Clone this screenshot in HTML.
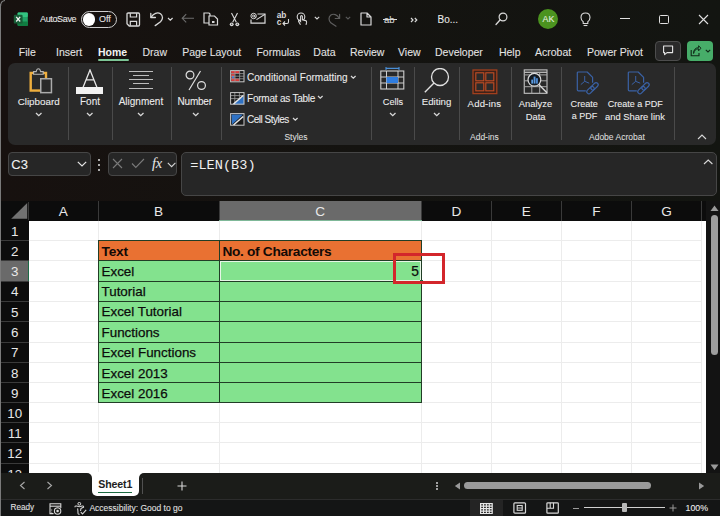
<!DOCTYPE html>
<html><head><meta charset="utf-8">
<style>
*{margin:0;padding:0;box-sizing:border-box}
html,body{width:720px;height:516px;overflow:hidden;background:linear-gradient(90deg,#17110f,#141310 50%,#131511) #15120f;font-family:"Liberation Sans",sans-serif;color:#fff;position:relative}
.a{position:absolute}
.t{position:absolute;white-space:nowrap;line-height:1}
</style></head><body>

<svg class="a" style="left:13px;top:12px;" width="16" height="15" viewBox="0 0 16 15" fill="none">
<rect x="4.6" y="0.6" width="10.2" height="13.4" rx="1.2" fill="#21a366"/>
<rect x="4.6" y="0.6" width="10.2" height="4.4" rx="1" fill="#33c481"/>
<rect x="4.6" y="9.6" width="10.2" height="4.4" rx="1" fill="#107c41"/>
<rect x="0.8" y="2.8" width="8.8" height="8.8" rx="1.2" fill="#185c37"/>
<path d="M3.2 4.9 L7.2 9.5 M7.2 4.9 L3.2 9.5" stroke="#f4f4f4" stroke-width="1.25"/>
</svg>
<div class="t" style="left:40px;top:14.88px;font-size:9px;color:#e8e8e8;font-weight:400;letter-spacing:-0.35px;-webkit-text-stroke:0.08px #e8e8e8">AutoSave</div>
<div class="a" style="left:81px;top:11px;width:36px;height:16.5px;border:1.2px solid #cfcfcf;border-radius:9px"></div>
<div class="a" style="left:82.8px;top:13px;width:12.5px;height:12.5px;background:#fff;border-radius:50%"></div>
<div class="t" style="left:99px;top:14.88px;font-size:9px;color:#e8e8e8;font-weight:400;;-webkit-text-stroke:0.08px #e8e8e8">Off</div>
<svg class="a" style="left:125.5px;top:11.5px;" width="15" height="15" viewBox="0 0 15 15" fill="none"><path d="M2.2 1 H12.3 Q13.5 1 13.5 2.2 V12.8 Q13.5 14 12.3 14 H3.2 L1 11.8 V2.2 Q1 1 2.2 1 Z" stroke="#d9d9d9" stroke-width="1.3" stroke-linejoin="round"/><path d="M4.3 1.2 V5 H10.6 V1.2 M4.3 13.8 V9.3 H10.6 V13.8" stroke="#d9d9d9" stroke-width="1.2"/></svg>
<svg class="a" style="left:149px;top:11px;" width="15" height="16" viewBox="0 0 15 16" fill="none"><path d="M1.8 2.4 V6.5 H6.4" stroke="#d9d9d9" stroke-width="1.3" stroke-linecap="round" stroke-linejoin="round"/><path d="M2.2 6.2 C4.5 2.5 8.5 0.8 11.5 2.8 C14.5 5 13.8 8.5 11.5 10.8 L6.2 14.6" stroke="#d9d9d9" stroke-width="1.3" stroke-linecap="round"/></svg>
<svg class="a" style="left:166.5px;top:16.5px;" width="7" height="4.5" viewBox="0 0 7 4.5" fill="none"><path d="M1 1 L3.3 3.2 L5.6 1" stroke="#d9d9d9" stroke-width="1.2"/></svg>
<svg class="a" style="left:180.5px;top:13px;" width="14" height="11" viewBox="0 0 14 11" fill="none"><path d="M13 5.3 H1.2 M5.2 1.2 L1.2 5.3 L5.2 9.4" stroke="#6e6e6e" stroke-width="1.1"/></svg>
<svg class="a" style="left:203px;top:12px;" width="16" height="14" viewBox="0 0 16 14" fill="none"><path d="M1 1 H6 L7 2 V11 H1 Z" stroke="#d9d9d9" stroke-width="1.2"/>
<path d="M6 4 H11.5 L14.5 7 V13 H6 Z" stroke="#d9d9d9" stroke-width="1.2" fill="#15120f"/><rect x="9" y="9" width="2.5" height="2" fill="#d9d9d9"/></svg>
<svg class="a" style="left:229px;top:12px;" width="11" height="15" viewBox="0 0 11 15" fill="none"><path d="M2.5 1 L7.3 10.2 M8.5 1 L3.7 10.2" stroke="#d9d9d9" stroke-width="1.1"/><circle cx="2.7" cy="12.3" r="1.9" fill="#d9d9d9"/><circle cx="8.3" cy="12.3" r="1.9" fill="#d9d9d9"/><circle cx="2.7" cy="12.3" r="0.7" fill="#444"/><circle cx="8.3" cy="12.3" r="0.7" fill="#444"/></svg>
<svg class="a" style="left:250px;top:12px;" width="16" height="13" viewBox="0 0 16 13" fill="none"><path d="M1 7.5 V11.2 H15 V2 H7.5" stroke="#d9d9d9" stroke-width="1.2"/><path d="M6.5 7.6 L15 2.2" stroke="#d9d9d9" stroke-width="1.1"/><circle cx="3.6" cy="4" r="2.7" stroke="#d9d9d9" stroke-width="1"/><path d="M4.6 3 V4.6 Q4.6 5.6 5.8 5.2" stroke="#d9d9d9" stroke-width="0.9"/><circle cx="3.5" cy="4" r="1" stroke="#d9d9d9" stroke-width="0.9"/></svg>
<div class="t" style="left:276.8px;top:12px;font-size:8.3px;color:#d9d9d9;line-height:6.6px;letter-spacing:-0.1px;font-weight:bold">ab<br>c</div>
<svg class="a" style="left:282px;top:18px;" width="8" height="8" viewBox="0 0 8 8" fill="none"><path d="M6.5 1 V4 Q6.5 5.5 5 5.5 H1 M3 3.5 L1 5.5 L3 7.5" stroke="#d9d9d9" stroke-width="1.1"/></svg>
<svg class="a" style="left:296px;top:12px;" width="12" height="14" viewBox="0 0 12 14" fill="none"><circle cx="5" cy="4.8" r="3.8" stroke="#d9d9d9" stroke-width="1.1"/>
<path d="M4.5 12.8 L2.6 9.6 Q2.2 8.6 3.3 8.4 L4.6 9.6 V4.6 Q4.6 3.6 5.5 3.6 Q6.4 3.6 6.4 4.6 V7.8 L9.6 8.6 Q10.8 9 10.6 10.4 L10 12.8" stroke="#d9d9d9" stroke-width="1.1" fill="#15120f"/></svg>
<svg class="a" style="left:314px;top:16px;" width="6" height="4" viewBox="0 0 6 4" fill="none"><path d="M0.8 0.8 L3 3 L5.2 0.8" stroke="#d9d9d9" stroke-width="1.1"/></svg>
<svg class="a" style="left:327px;top:11.5px;" width="15" height="16" viewBox="0 0 15 16" fill="none"><path d="M12.6 2.4 V6.5 H8.2" stroke="#5e5e5e" stroke-width="1.2" stroke-linecap="round" stroke-linejoin="round"/><path d="M12.3 6.2 C10.2 2.8 6.6 1.2 3.9 3 C1.2 5 1.6 8.5 3.8 10.8 L9 14.2" stroke="#5e5e5e" stroke-width="1.2" stroke-linecap="round"/></svg>
<svg class="a" style="left:345px;top:16px;" width="6" height="4" viewBox="0 0 6 4" fill="none"><path d="M0.8 0.8 L3 3 L5.2 0.8" stroke="#5a5a5a" stroke-width="1.1"/></svg>
<svg class="a" style="left:360px;top:12px;" width="12" height="14" viewBox="0 0 12 14" fill="none"><path d="M1 1 H7 L11 5 V13 H1 Z M7 1 V5 H11" stroke="#d9d9d9" stroke-width="1.2" stroke-linejoin="round"/></svg>
<div class="t" style="left:384px;top:14.96px;font-size:9.5px;color:#d9d9d9;font-weight:400;;-webkit-text-stroke:0.08px #d9d9d9">ab</div>
<div class="a" style="left:383px;top:19px;width:14px;height:1.1px;background:#d9d9d9"></div>
<svg class="a" style="left:409.5px;top:16.5px;" width="8" height="6" viewBox="0 0 8 6" fill="none"><path d="M1 1 L3 3 L1 5 M4.8 1 L6.8 3 L4.8 5" stroke="#d9d9d9" stroke-width="1.2"/></svg>
<div class="t" style="left:437.5px;top:14.54px;font-size:10px;color:#e8e8e8;font-weight:400;;-webkit-text-stroke:0.08px #e8e8e8">Bo...</div>
<svg class="a" style="left:495px;top:12px;" width="13" height="14" viewBox="0 0 13 14" fill="none"><circle cx="8" cy="5" r="3.9" stroke="#d9d9d9" stroke-width="1.2"/><path d="M5.2 7.8 L1 12.5" stroke="#d9d9d9" stroke-width="1.3" stroke-linecap="round"/></svg>
<div class="a" style="left:537.8px;top:8.9px;width:20.4px;height:20.3px;background:#4b931f;border-radius:50%"></div>
<div class="t" style="left:542.6px;top:15.15px;font-size:8.8px;color:#e8f0e0;font-weight:400;;-webkit-text-stroke:0.08px #e8f0e0">AK</div>
<svg class="a" style="left:580px;top:12px;" width="11" height="15" viewBox="0 0 11 15" fill="none"><path d="M3.2 9.8 Q1 8.2 1 5.6 Q1 1 5.5 1 Q10 1 10 5.6 Q10 8.2 7.8 9.8 V11.5 H3.2 Z" stroke="#d9d9d9" stroke-width="1.1"/><path d="M3.6 13.5 H7.4" stroke="#d9d9d9" stroke-width="1.1"/></svg>
<div class="a" style="left:619.5px;top:18px;width:10px;height:1.1px;background:#e0e0e0"></div>
<div class="a" style="left:659px;top:14.5px;width:9.5px;height:9.5px;border:1.1px solid #e0e0e0;border-radius:1.5px"></div>
<svg class="a" style="left:698px;top:14px;" width="11" height="11" viewBox="0 0 11 11" fill="none"><path d="M1 1 L10 10 M10 1 L1 10" stroke="#e0e0e0" stroke-width="1.1"/></svg>
<div class="t" style="left:18.8px;top:47.21px;font-size:10.5px;color:#e3e3e3;font-weight:400;;-webkit-text-stroke:0.08px #e3e3e3">File</div>
<div class="t" style="left:56px;top:47.21px;font-size:10.5px;color:#e3e3e3;font-weight:400;;-webkit-text-stroke:0.08px #e3e3e3">Insert</div>
<div class="t" style="left:98px;top:47.21px;font-size:10.5px;color:#f2f2f2;font-weight:700;">Home</div>
<div class="t" style="left:142.5px;top:47.21px;font-size:10.5px;color:#e3e3e3;font-weight:400;;-webkit-text-stroke:0.08px #e3e3e3">Draw</div>
<div class="t" style="left:182.2px;top:47.21px;font-size:10.5px;color:#e3e3e3;font-weight:400;;-webkit-text-stroke:0.08px #e3e3e3">Page Layout</div>
<div class="t" style="left:256.4px;top:47.21px;font-size:10.5px;color:#e3e3e3;font-weight:400;;-webkit-text-stroke:0.08px #e3e3e3">Formulas</div>
<div class="t" style="left:313.3px;top:47.21px;font-size:10.5px;color:#e3e3e3;font-weight:400;;-webkit-text-stroke:0.08px #e3e3e3">Data</div>
<div class="t" style="left:350px;top:47.21px;font-size:10.5px;color:#e3e3e3;font-weight:400;;-webkit-text-stroke:0.08px #e3e3e3">Review</div>
<div class="t" style="left:398px;top:47.21px;font-size:10.5px;color:#e3e3e3;font-weight:400;;-webkit-text-stroke:0.08px #e3e3e3">View</div>
<div class="t" style="left:435px;top:47.21px;font-size:10.5px;color:#e3e3e3;font-weight:400;;-webkit-text-stroke:0.08px #e3e3e3">Developer</div>
<div class="t" style="left:498.9px;top:47.21px;font-size:10.5px;color:#e3e3e3;font-weight:400;;-webkit-text-stroke:0.08px #e3e3e3">Help</div>
<div class="t" style="left:535px;top:47.21px;font-size:10.5px;color:#e3e3e3;font-weight:400;;-webkit-text-stroke:0.08px #e3e3e3">Acrobat</div>
<div class="t" style="left:587px;top:47.21px;font-size:10.5px;color:#e3e3e3;font-weight:400;;-webkit-text-stroke:0.08px #e3e3e3">Power Pivot</div>
<div class="a" style="left:98px;top:58.8px;width:31px;height:2.1px;background:#7cc596;border-radius:1px"></div>
<div class="a" style="left:655.3px;top:41px;width:25.6px;height:19.7px;background:#2a2a2a;border:1px solid #4d4d4d;border-radius:4px"></div>
<svg class="a" style="left:662px;top:45px;" width="13" height="11" viewBox="0 0 13 11" fill="none"><path d="M1.6 1 H10.6 V7.6 H5 L2.6 9.6 V7.6 H1.6 Z" stroke="#e6e6e6" stroke-width="1.1" stroke-linejoin="round"/></svg>
<div class="a" style="left:687px;top:41px;width:26.2px;height:19.7px;background:#47ad69;border-radius:4px"></div>
<svg class="a" style="left:690px;top:45px;" width="12" height="12" viewBox="0 0 12 12" fill="none"><path d="M1.2 5 V10.8 H9 V8" stroke="#102a18" stroke-width="1.1"/><path d="M3.6 8.5 Q4.2 4 8.6 3.8 V5.8 L11 3.2 L8.6 0.8 V2.6 Q3.5 3 3.6 8.5" stroke="#102a18" stroke-width="1" fill="none"/></svg>
<svg class="a" style="left:704.5px;top:49px;" width="6" height="4" viewBox="0 0 6 4" fill="none"><path d="M0.8 0.8 L3 3 L5.2 0.8" stroke="#102a18" stroke-width="1.1"/></svg>
<div class="a" style="left:8px;top:63px;width:708px;height:81.5px;background:#292929;border-radius:7px"></div>
<div class="a" style="left:67.5px;top:67px;width:1px;height:73px;background:#4a4a4a"></div>
<div class="a" style="left:111.5px;top:67px;width:1px;height:73px;background:#4a4a4a"></div>
<div class="a" style="left:170.5px;top:67px;width:1px;height:73px;background:#4a4a4a"></div>
<div class="a" style="left:220.5px;top:67px;width:1px;height:73px;background:#4a4a4a"></div>
<div class="a" style="left:370.6px;top:67px;width:1px;height:73px;background:#4a4a4a"></div>
<div class="a" style="left:414.3px;top:67px;width:1px;height:73px;background:#4a4a4a"></div>
<div class="a" style="left:459.4px;top:67px;width:1px;height:73px;background:#4a4a4a"></div>
<div class="a" style="left:510.6px;top:67px;width:1px;height:73px;background:#4a4a4a"></div>
<div class="a" style="left:560.6px;top:67px;width:1px;height:73px;background:#4a4a4a"></div>
<div class="a" style="left:673.7px;top:67px;width:1px;height:73px;background:#4a4a4a"></div>
<svg class="a" style="left:28px;top:67px;" width="26" height="28" viewBox="0 0 26 28" fill="none"><rect x="2.7" y="5.95" width="15.3" height="17.6" stroke="#eeae3e" stroke-width="2.4"/>
<path d="M5.6 7.2 V4.6 H8.2 Q8.7 1.7 10.4 1.7 Q12.1 1.7 12.6 4.6 H15.2 V7.2 Z" stroke="#b8b8b8" stroke-width="1.1" fill="#292929"/>
<rect x="12.75" y="11.75" width="10.7" height="13.9" stroke="#ababab" stroke-width="1.5" fill="#292929"/></svg>
<div class="t" style="left:17.7px;top:97.40px;font-size:9.8px;color:#ececec;font-weight:400;;-webkit-text-stroke:0.08px #ececec">Clipboard</div>
<svg class="a" style="left:34.65px;top:112.0px;" width="8" height="5" viewBox="0 0 8 5" fill="none"><path d="M1 1 L3.75 3.7 L6.5 1" stroke="#d8d8d8" stroke-width="1.3"/></svg>
<svg class="a" style="left:82px;top:68.5px;" width="16" height="19" viewBox="0 0 16 19" fill="none"><path d="M1 18.5 L8 1 L15 18.5 M4 10.8 H12" stroke="#e6e6e6" stroke-width="1.3"/></svg>
<div class="a" style="left:76px;top:86.7px;width:27.3px;height:7px;background:#f2f2f2"></div>
<div class="t" style="left:80px;top:97.23px;font-size:10px;color:#ececec;font-weight:400;;-webkit-text-stroke:0.08px #ececec">Font</div>
<svg class="a" style="left:85.55px;top:112.0px;" width="8" height="5" viewBox="0 0 8 5" fill="none"><path d="M1 1 L3.75 3.7 L6.5 1" stroke="#d8d8d8" stroke-width="1.3"/></svg>
<div class="a" style="left:129px;top:70.5px;width:24px;height:1.2px;background:#bdbdbd"></div>
<div class="a" style="left:133px;top:74.75px;width:16px;height:1.2px;background:#bdbdbd"></div>
<div class="a" style="left:129px;top:79.0px;width:24px;height:1.2px;background:#bdbdbd"></div>
<div class="a" style="left:133px;top:83.25px;width:16px;height:1.2px;background:#bdbdbd"></div>
<div class="a" style="left:129px;top:87.5px;width:24px;height:1.2px;background:#bdbdbd"></div>
<div class="t" style="left:118.7px;top:97.23px;font-size:10px;color:#ececec;font-weight:400;;-webkit-text-stroke:0.08px #ececec">Alignment</div>
<svg class="a" style="left:136.75px;top:112.0px;" width="8" height="5" viewBox="0 0 8 5" fill="none"><path d="M1 1 L3.75 3.7 L6.5 1" stroke="#d8d8d8" stroke-width="1.3"/></svg>
<svg class="a" style="left:185px;top:70px;" width="22" height="21" viewBox="0 0 22 21" fill="none"><circle cx="5" cy="5" r="3.9" stroke="#e0e0e0" stroke-width="1.2"/><circle cx="16.5" cy="15.5" r="3.9" stroke="#e0e0e0" stroke-width="1.2"/><path d="M15.5 1 L4 20" stroke="#e0e0e0" stroke-width="1.2"/></svg>
<div class="t" style="left:177.5px;top:97.23px;font-size:10px;color:#ececec;font-weight:400;letter-spacing:-0.2px;-webkit-text-stroke:0.08px #ececec">Number</div>
<svg class="a" style="left:191.55px;top:112.0px;" width="8" height="5" viewBox="0 0 8 5" fill="none"><path d="M1 1 L3.75 3.7 L6.5 1" stroke="#d8d8d8" stroke-width="1.3"/></svg>
<svg class="a" style="left:230px;top:70px;" width="15" height="13" viewBox="0 0 15 13" fill="none"><rect x="0.6" y="0.6" width="13.4" height="11.2" fill="#1a1a1a"/>
<rect x="1.2" y="1" width="8.4" height="2.6" fill="#d83b3b"/><rect x="1.2" y="3.6" width="3.6" height="5" fill="#d83b3b"/>
<rect x="2" y="6" width="2.2" height="2.4" fill="#3a7bd5"/><rect x="1.2" y="8.6" width="8.4" height="2.6" fill="#d83b3b"/>
<rect x="0.6" y="0.6" width="13.4" height="11.2" stroke="#c8c8c8" stroke-width="1"/>
<path d="M5 0.6 V11.8 M9.6 0.6 V11.8 M0.6 3.6 H14 M0.6 6.2 H14 M0.6 8.8 H14" stroke="#9a9a9a" stroke-width="0.8"/></svg>
<div class="t" style="left:247px;top:72.63px;font-size:10px;color:#ececec;font-weight:400;;-webkit-text-stroke:0.08px #ececec">Conditional Formatting</div>
<svg class="a" style="left:350.2px;top:74.5px;" width="7" height="4.5" viewBox="0 0 7 4.5" fill="none"><path d="M1 1 L3.3 3.2 L5.6 1" stroke="#d8d8d8" stroke-width="1.2"/></svg>
<svg class="a" style="left:230px;top:91.5px;" width="15" height="13" viewBox="0 0 15 13" fill="none"><rect x="0.6" y="0.6" width="13.4" height="11.6" fill="#1a1a1a"/>
<path d="M0.6 3.6 H14 M0.6 6.6 H14 M4.8 0.6 V12.2 M9.4 0.6 V12.2" stroke="#a0a0a0" stroke-width="0.8"/>
<path d="M2.5 12.2 L14 4 V12.2 Z" fill="#2f72c4"/>
<rect x="0.6" y="0.6" width="13.4" height="11.6" stroke="#c8c8c8" stroke-width="1"/>
<path d="M3.5 12 L13.2 3.5" stroke="#e6e6e6" stroke-width="1.6"/></svg>
<div class="t" style="left:247px;top:93.73px;font-size:10px;color:#ececec;font-weight:400;letter-spacing:-0.22px;-webkit-text-stroke:0.08px #ececec">Format as Table</div>
<svg class="a" style="left:317.4px;top:95.3px;" width="7" height="4.5" viewBox="0 0 7 4.5" fill="none"><path d="M1 1 L3.3 3.2 L5.6 1" stroke="#d8d8d8" stroke-width="1.2"/></svg>
<svg class="a" style="left:230px;top:112.5px;" width="15" height="13" viewBox="0 0 15 13" fill="none"><rect x="0.6" y="0.6" width="13.4" height="11.6" fill="#1a1a1a"/>
<path d="M1.5 1.5 H13 L2 11.5 Z" fill="#2f72c4"/>
<rect x="0.6" y="0.6" width="13.4" height="11.6" stroke="#c8c8c8" stroke-width="1"/>
<path d="M3.5 12 L13.2 3.5" stroke="#e6e6e6" stroke-width="1.6"/></svg>
<div class="t" style="left:247px;top:115.33px;font-size:10px;color:#ececec;font-weight:400;letter-spacing:-0.5px;-webkit-text-stroke:0.08px #ececec">Cell Styles</div>
<svg class="a" style="left:292.0px;top:116.9px;" width="7" height="4.5" viewBox="0 0 7 4.5" fill="none"><path d="M1 1 L3.3 3.2 L5.6 1" stroke="#d8d8d8" stroke-width="1.2"/></svg>
<div class="t" style="left:284.4px;top:132.50px;font-size:8.5px;color:#dcdcdc;font-weight:400;;-webkit-text-stroke:0.08px #dcdcdc">Styles</div>
<svg class="a" style="left:380px;top:66px;" width="25" height="24" viewBox="0 0 25 24" fill="none"><path d="M6 2.4 H19 M6 1 V4 M19 1 V4" stroke="#4a8fd6" stroke-width="1.1"/>
<rect x="0.8" y="5" width="23" height="18" stroke="#d0d0d0" stroke-width="1.1"/>
<path d="M0.8 11 H23.8 M0.8 17 H23.8 M6.5 5 V23 M18 5 V23" stroke="#d0d0d0" stroke-width="1"/>
<rect x="6.5" y="11" width="11.5" height="6" fill="#2f7de0"/></svg>
<div class="t" style="left:382.8px;top:97.91px;font-size:9.2px;color:#ececec;font-weight:400;;-webkit-text-stroke:0.08px #ececec">Cells</div>
<svg class="a" style="left:388.75px;top:112.0px;" width="8" height="5" viewBox="0 0 8 5" fill="none"><path d="M1 1 L3.75 3.7 L6.5 1" stroke="#d8d8d8" stroke-width="1.3"/></svg>
<svg class="a" style="left:423px;top:68px;" width="28" height="26" viewBox="0 0 28 26" fill="none"><circle cx="17" cy="9" r="8.5" stroke="#e0e0e0" stroke-width="1.3"/><path d="M11 15 L1.8 24.2" stroke="#e0e0e0" stroke-width="1.4"/></svg>
<div class="t" style="left:421.7px;top:97.49px;font-size:9.7px;color:#ececec;font-weight:400;;-webkit-text-stroke:0.08px #ececec">Editing</div>
<svg class="a" style="left:432.75px;top:112.0px;" width="8" height="5" viewBox="0 0 8 5" fill="none"><path d="M1 1 L3.75 3.7 L6.5 1" stroke="#d8d8d8" stroke-width="1.3"/></svg>
<svg class="a" style="left:472px;top:69px;" width="26" height="26" viewBox="0 0 26 26" fill="none"><rect x="1" y="1" width="23.8" height="23.6" stroke="#a23f1d" stroke-width="1.3" fill="#3b2119"/>
<rect x="3.8" y="3.8" width="8" height="8" stroke="#c24d24" stroke-width="1.1" fill="#2b2a2a"/><rect x="13.8" y="3.8" width="8" height="8" stroke="#c24d24" stroke-width="1.1" fill="#2b2a2a"/>
<rect x="3.8" y="13.8" width="8" height="8" stroke="#c24d24" stroke-width="1.1" fill="#2b2a2a"/><rect x="13.8" y="13.8" width="8" height="8" stroke="#c24d24" stroke-width="1.1" fill="#2b2a2a"/></svg>
<div class="t" style="left:467.6px;top:98.57px;font-size:9.6px;color:#ececec;font-weight:400;letter-spacing:0.15px;-webkit-text-stroke:0.08px #ececec">Add-ins</div>
<div class="t" style="left:470px;top:132.50px;font-size:8.5px;color:#dcdcdc;font-weight:400;;-webkit-text-stroke:0.08px #dcdcdc">Add-ins</div>
<svg class="a" style="left:523px;top:69px;" width="26" height="26" viewBox="0 0 26 26" fill="none"><rect x="1.25" y="0.9" width="22.75" height="23.4" stroke="#c4c4c4" stroke-width="1.1"/>
<path d="M1.25 3.3 H24" stroke="#bdbdbd" stroke-width="1.3"/>
<path d="M1.25 5.9 H24 M1.25 11.8 H24 M1.25 17.7 H24 M8.8 3.3 V24.3 M16.7 3.3 V24.3" stroke="#a8a8a8" stroke-width="1"/>
<circle cx="11.4" cy="10.8" r="6.4" stroke="#dadada" stroke-width="1.2" fill="#131920"/>
<path d="M15.8 15.4 L24 23.8" stroke="#dadada" stroke-width="1.4"/>
<rect x="8.3" y="10.6" width="1.7" height="4" fill="#5a9ae0"/><rect x="10.6" y="7.6" width="1.9" height="7" fill="#5a9ae0"/><rect x="13" y="9.2" width="1.9" height="5.4" fill="#4a84cc"/></svg>
<div class="t" style="left:518.8px;top:99.44px;font-size:9.4px;color:#ececec;font-weight:400;;-webkit-text-stroke:0.08px #ececec">Analyze</div>
<div class="t" style="left:525.7px;top:111.74px;font-size:9.4px;color:#ececec;font-weight:400;;-webkit-text-stroke:0.08px #ececec">Data</div>
<svg class="a" style="left:575.5px;top:71px;" width="24" height="24" viewBox="0 0 24 24" fill="none"><path d="M9.8 19.8 H2.4 Q1.3 19.8 1.3 18.7 V2.1 Q1.3 1 2.4 1 H11.2 L16.6 6.4 V11.8" stroke="#3a62a6" stroke-width="1.2" stroke-linejoin="round"/>
<path d="M8.7 5 V10.3 L4.8 13.6 M8.7 10.3 L13.2 12.2" stroke="#3a62a6" stroke-width="1"/>
<rect x="12.4" y="14.8" width="4.2" height="8.6" rx="2.1" transform="rotate(45 14.5 19.1)" stroke="#3a62a6" stroke-width="1.2"/>
<rect x="16.4" y="11" width="4.2" height="8.6" rx="2.1" transform="rotate(45 18.5 15.3)" stroke="#3a62a6" stroke-width="1.2"/></svg>
<div class="t" style="left:570.6px;top:99.50px;font-size:9.1px;color:#ececec;font-weight:400;;-webkit-text-stroke:0.08px #ececec">Create</div>
<div class="t" style="left:571.7px;top:111.88px;font-size:9px;color:#ececec;font-weight:400;;-webkit-text-stroke:0.08px #ececec">a PDF</div>
<svg class="a" style="left:626.5px;top:71px;" width="24" height="24" viewBox="0 0 24 24" fill="none"><path d="M9.8 19.8 H2.4 Q1.3 19.8 1.3 18.7 V2.1 Q1.3 1 2.4 1 H11.2 L16.6 6.4 V11.8" stroke="#3a62a6" stroke-width="1.2" stroke-linejoin="round"/>
<path d="M8.7 5 V10.3 L4.8 13.6 M8.7 10.3 L13.2 12.2" stroke="#3a62a6" stroke-width="1"/>
<rect x="12.4" y="14.8" width="4.2" height="8.6" rx="2.1" transform="rotate(45 14.5 19.1)" stroke="#3a62a6" stroke-width="1.2"/>
<rect x="16.4" y="11" width="4.2" height="8.6" rx="2.1" transform="rotate(45 18.5 15.3)" stroke="#3a62a6" stroke-width="1.2"/></svg>
<div class="t" style="left:607.7px;top:99.58px;font-size:9px;color:#ececec;font-weight:400;;-webkit-text-stroke:0.08px #ececec">Create a PDF</div>
<div class="t" style="left:605px;top:111.54px;font-size:9.4px;color:#ececec;font-weight:400;;-webkit-text-stroke:0.08px #ececec">and Share link</div>
<div class="t" style="left:589px;top:133.00px;font-size:8.5px;color:#dcdcdc;font-weight:400;;-webkit-text-stroke:0.08px #dcdcdc">Adobe Acrobat</div>
<svg class="a" style="left:697px;top:134px;" width="10" height="6" viewBox="0 0 10 6" fill="none"><path d="M1 5 L5 1 L9 5" stroke="#d8d8d8" stroke-width="1.1"/></svg>
<div class="a" style="left:7.5px;top:152px;width:83.5px;height:23.5px;background:#262626;border:1px solid #464646;border-radius:4px"></div>
<div class="t" style="left:11.3px;top:157.90px;font-size:13px;color:#f2f2f2;font-weight:400;;-webkit-text-stroke:0.08px #f2f2f2">C3</div>
<svg class="a" style="left:77px;top:161px;" width="10" height="6.5" viewBox="0 0 10 6.5" fill="none"><path d="M0.8 0.8 L5 5 L9.2 0.8" stroke="#e6e6e6" stroke-width="1.2"/></svg>
<div class="a" style="left:98.3px;top:159.2px;width:2px;height:2px;background:#e0e0e0;border-radius:50%"></div>
<div class="a" style="left:98.3px;top:164.2px;width:2px;height:2px;background:#e0e0e0;border-radius:50%"></div>
<div class="a" style="left:98.3px;top:169.2px;width:2px;height:2px;background:#e0e0e0;border-radius:50%"></div>
<div class="a" style="left:107.5px;top:152px;width:69.5px;height:23.5px;background:#262626;border:1px solid #464646;border-radius:4px"></div>
<svg class="a" style="left:112px;top:158px;" width="11" height="11" viewBox="0 0 11 11" fill="none"><path d="M1 1 L10 10 M10 1 L1 10" stroke="#7a7a7a" stroke-width="1.1"/></svg>
<svg class="a" style="left:131px;top:158px;" width="14" height="11" viewBox="0 0 14 11" fill="none"><path d="M1 5.5 L4.8 9.5 L13 1" stroke="#7a7a7a" stroke-width="1.1"/></svg>
<div class="t" style="left:152px;top:156px;font-size:14.5px;color:#e8e8e8;font-family:'Liberation Serif',serif;font-style:italic;letter-spacing:-0.3px">fx</div>
<svg class="a" style="left:166.5px;top:161.5px;" width="10" height="6" viewBox="0 0 10 6" fill="none"><path d="M0.8 0.8 L4.6 4.6 L8.4 0.8" stroke="#d6d6d6" stroke-width="1.1"/></svg>
<div class="a" style="left:180.5px;top:152px;width:536px;height:43.5px;background:#262626;border:1px solid #464646;border-radius:5px"></div>
<div class="t" style="left:190.3px;top:158.5px;font-size:13.6px;color:#f0f0f0;font-family:'Liberation Mono',monospace">=LEN(B3)</div>
<svg class="a" style="left:703px;top:159px;" width="11" height="6" viewBox="0 0 11 6" fill="none"><path d="M1 5 L5.2 1 L9.4 5" stroke="#d8d8d8" stroke-width="1.1"/></svg>
<div class="a" style="left:1px;top:201px;width:705px;height:19.5px;background:#0c0c0c"></div>
<div class="a" style="left:29px;top:220.5px;width:677px;height:258px;background:#ffffff"></div>
<div class="t" style="left:28.5px;width:69.8px;top:204.6px;font-size:13.6px;color:#e8e8e8;text-align:center">A</div>
<div class="t" style="left:98.3px;width:120.7px;top:204.6px;font-size:13.6px;color:#e8e8e8;text-align:center">B</div>
<div class="a" style="left:97.8px;top:201px;width:1px;height:19.5px;background:#3a3a3a"></div>
<div class="a" style="left:219px;top:201px;width:202.5px;height:19.5px;background:#6a6a6a"></div>
<div class="t" style="left:219px;width:202.5px;top:204.6px;font-size:13.6px;color:#e8e8e8;text-align:center">C</div>
<div class="a" style="left:218.5px;top:201px;width:1px;height:19.5px;background:#3a3a3a"></div>
<div class="t" style="left:421.5px;width:69.89999999999998px;top:204.6px;font-size:13.6px;color:#e8e8e8;text-align:center">D</div>
<div class="a" style="left:421.0px;top:201px;width:1px;height:19.5px;background:#3a3a3a"></div>
<div class="t" style="left:491.4px;width:69.89999999999998px;top:204.6px;font-size:13.6px;color:#e8e8e8;text-align:center">E</div>
<div class="a" style="left:490.9px;top:201px;width:1px;height:19.5px;background:#3a3a3a"></div>
<div class="t" style="left:561.3px;width:70.0px;top:204.6px;font-size:13.6px;color:#e8e8e8;text-align:center">F</div>
<div class="a" style="left:560.8px;top:201px;width:1px;height:19.5px;background:#3a3a3a"></div>
<div class="t" style="left:631.3px;width:70.5px;top:204.6px;font-size:13.6px;color:#e8e8e8;text-align:center">G</div>
<div class="a" style="left:630.8px;top:201px;width:1px;height:19.5px;background:#3a3a3a"></div>
<div class="a" style="left:701.3px;top:201px;width:1px;height:19.5px;background:#3a3a3a"></div>
<div class="a" style="left:219px;top:219.6px;width:202.5px;height:1.2px;background:#7fb898"></div>
<svg class="a" style="left:1px;top:201px;" width="28" height="20" viewBox="0 0 28 20" fill="none"><path d="M26.2 2 V17.8 H10.2 Z" fill="#727272"/></svg>
<div class="a" style="left:28px;top:202px;width:1px;height:18px;background:#3a3a3a"></div>
<div class="a" style="left:1px;top:220.5px;width:28px;height:252.5px;background:#0c0c0c"></div>
<div class="t" style="left:1px;width:27.5px;top:224.5px;font-size:13.4px;color:#e8e8e8;text-align:center">1</div>
<div class="a" style="left:1px;top:240.3px;width:27.5px;height:1px;background:#3a3a3a"></div>
<div class="t" style="left:1px;width:27.5px;top:245.1px;font-size:13.4px;color:#e8e8e8;text-align:center">2</div>
<div class="a" style="left:1px;top:260.4px;width:27.5px;height:1px;background:#3a3a3a"></div>
<div class="a" style="left:1px;top:260.9px;width:27.5px;height:20.100000000000023px;background:#6a6a6a"></div>
<div class="t" style="left:1px;width:27.5px;top:265.2px;font-size:13.4px;color:#e8e8e8;text-align:center">3</div>
<div class="a" style="left:1px;top:280.5px;width:27.5px;height:1px;background:#3a3a3a"></div>
<div class="t" style="left:1px;width:27.5px;top:285.3px;font-size:13.4px;color:#e8e8e8;text-align:center">4</div>
<div class="a" style="left:1px;top:300.7px;width:27.5px;height:1px;background:#3a3a3a"></div>
<div class="t" style="left:1px;width:27.5px;top:305.5px;font-size:13.4px;color:#e8e8e8;text-align:center">5</div>
<div class="a" style="left:1px;top:321.0px;width:27.5px;height:1px;background:#3a3a3a"></div>
<div class="t" style="left:1px;width:27.5px;top:325.8px;font-size:13.4px;color:#e8e8e8;text-align:center">6</div>
<div class="a" style="left:1px;top:341.6px;width:27.5px;height:1px;background:#3a3a3a"></div>
<div class="t" style="left:1px;width:27.5px;top:346.4px;font-size:13.4px;color:#e8e8e8;text-align:center">7</div>
<div class="a" style="left:1px;top:362.0px;width:27.5px;height:1px;background:#3a3a3a"></div>
<div class="t" style="left:1px;width:27.5px;top:366.8px;font-size:13.4px;color:#e8e8e8;text-align:center">8</div>
<div class="a" style="left:1px;top:382.0px;width:27.5px;height:1px;background:#3a3a3a"></div>
<div class="t" style="left:1px;width:27.5px;top:386.8px;font-size:13.4px;color:#e8e8e8;text-align:center">9</div>
<div class="a" style="left:1px;top:402.2px;width:27.5px;height:1px;background:#3a3a3a"></div>
<div class="t" style="left:1px;width:27.5px;top:407.0px;font-size:13.4px;color:#e8e8e8;text-align:center">10</div>
<div class="a" style="left:1px;top:422.0px;width:27.5px;height:1px;background:#3a3a3a"></div>
<div class="t" style="left:1px;width:27.5px;top:426.8px;font-size:13.4px;color:#e8e8e8;text-align:center">11</div>
<div class="a" style="left:1px;top:442.4px;width:27.5px;height:1px;background:#3a3a3a"></div>
<div class="t" style="left:1px;width:27.5px;top:447.2px;font-size:13.4px;color:#e8e8e8;text-align:center">12</div>
<div class="a" style="left:1px;top:462.6px;width:27.5px;height:1px;background:#3a3a3a"></div>
<div class="t" style="left:1px;width:27.5px;top:467.7px;font-size:13px;color:#e6e6e6;text-align:center;height:5px;overflow:hidden;line-height:13px">13</div>
<div class="a" style="left:28px;top:261px;width:1.2px;height:20px;background:#1d6b47"></div>
<div class="a" style="left:29px;top:240.3px;width:673px;height:1px;background:#ececec"></div>
<div class="a" style="left:29px;top:260.4px;width:673px;height:1px;background:#ececec"></div>
<div class="a" style="left:29px;top:280.5px;width:673px;height:1px;background:#ececec"></div>
<div class="a" style="left:29px;top:300.7px;width:673px;height:1px;background:#ececec"></div>
<div class="a" style="left:29px;top:321.0px;width:673px;height:1px;background:#ececec"></div>
<div class="a" style="left:29px;top:341.6px;width:673px;height:1px;background:#ececec"></div>
<div class="a" style="left:29px;top:362.0px;width:673px;height:1px;background:#ececec"></div>
<div class="a" style="left:29px;top:382.0px;width:673px;height:1px;background:#ececec"></div>
<div class="a" style="left:29px;top:402.2px;width:673px;height:1px;background:#ececec"></div>
<div class="a" style="left:29px;top:422.0px;width:673px;height:1px;background:#ececec"></div>
<div class="a" style="left:29px;top:442.4px;width:673px;height:1px;background:#ececec"></div>
<div class="a" style="left:29px;top:462.6px;width:673px;height:1px;background:#ececec"></div>
<div class="a" style="left:97.8px;top:220.5px;width:1px;height:252.5px;background:#ececec"></div>
<div class="a" style="left:218.5px;top:220.5px;width:1px;height:252.5px;background:#ececec"></div>
<div class="a" style="left:421.0px;top:220.5px;width:1px;height:252.5px;background:#ececec"></div>
<div class="a" style="left:490.9px;top:220.5px;width:1px;height:252.5px;background:#ececec"></div>
<div class="a" style="left:560.8px;top:220.5px;width:1px;height:252.5px;background:#ececec"></div>
<div class="a" style="left:630.8px;top:220.5px;width:1px;height:252.5px;background:#ececec"></div>
<div class="a" style="left:701.3px;top:220.5px;width:1px;height:252.5px;background:#ececec"></div>
<div class="a" style="left:98.3px;top:240.8px;width:323.2px;height:20.1px;background:#e97132"></div>
<div class="a" style="left:98.3px;top:260.9px;width:323.2px;height:141.8px;background:#83e28e"></div>
<div class="a" style="left:98px;top:240.3px;width:323.5px;height:1px;background:#213d26"></div>
<div class="a" style="left:98px;top:260.4px;width:323.5px;height:1px;background:#213d26"></div>
<div class="a" style="left:98px;top:280.5px;width:323.5px;height:1px;background:#213d26"></div>
<div class="a" style="left:98px;top:300.7px;width:323.5px;height:1px;background:#213d26"></div>
<div class="a" style="left:98px;top:321.0px;width:323.5px;height:1px;background:#213d26"></div>
<div class="a" style="left:98px;top:341.6px;width:323.5px;height:1px;background:#213d26"></div>
<div class="a" style="left:98px;top:362.0px;width:323.5px;height:1px;background:#213d26"></div>
<div class="a" style="left:98px;top:382.0px;width:323.5px;height:1px;background:#213d26"></div>
<div class="a" style="left:98px;top:402.2px;width:323.5px;height:1px;background:#213d26"></div>
<div class="a" style="left:97.8px;top:240.3px;width:1px;height:162.4px;background:#213d26"></div>
<div class="a" style="left:218.5px;top:240.3px;width:1px;height:162.4px;background:#213d26"></div>
<div class="a" style="left:421px;top:240.3px;width:1px;height:162.4px;background:#213d26"></div>
<div class="a" style="left:219.5px;top:261.3px;width:201.5px;height:1px;background:#e6f6e6"></div>
<div class="a" style="left:219.5px;top:279.8px;width:201.5px;height:1px;background:#e6f6e6"></div>
<div class="a" style="left:219.8px;top:261.3px;width:1px;height:19.5px;background:#e6f6e6"></div>
<div class="a" style="left:419.8px;top:261.3px;width:1px;height:18.5px;background:#e6f6e6"></div>
<div class="t" style="left:101.5px;top:244.90px;font-size:13.7px;color:#120a06;font-weight:700;letter-spacing:-0.2px">Text</div>
<div class="t" style="left:222.4px;top:244.90px;font-size:13.7px;color:#120a06;font-weight:700;letter-spacing:-0.3px">No. of Characters</div>
<div class="t" style="left:101.5px;top:264.96px;font-size:13.4px;color:#0c0c0c;font-weight:400;-webkit-text-stroke:0.25px #0c0c0c">Excel</div>
<div class="t" style="left:101.5px;top:285.06px;font-size:13.4px;color:#0c0c0c;font-weight:400;-webkit-text-stroke:0.25px #0c0c0c">Tutorial</div>
<div class="t" style="left:101.5px;top:305.26px;font-size:13.4px;color:#0c0c0c;font-weight:400;-webkit-text-stroke:0.25px #0c0c0c">Excel Tutorial</div>
<div class="t" style="left:101.5px;top:325.56px;font-size:13.4px;color:#0c0c0c;font-weight:400;-webkit-text-stroke:0.25px #0c0c0c">Functions</div>
<div class="t" style="left:101.5px;top:346.16px;font-size:13.4px;color:#0c0c0c;font-weight:400;-webkit-text-stroke:0.25px #0c0c0c">Excel Functions</div>
<div class="t" style="left:101.5px;top:366.56px;font-size:13.4px;color:#0c0c0c;font-weight:400;-webkit-text-stroke:0.25px #0c0c0c">Excel 2013</div>
<div class="t" style="left:101.5px;top:386.56px;font-size:13.4px;color:#0c0c0c;font-weight:400;-webkit-text-stroke:0.25px #0c0c0c">Excel 2016</div>
<div class="t" style="left:411.2px;top:265.32px;font-size:13.8px;color:#0c0c0c;font-weight:400;-webkit-text-stroke:0.25px #0c0c0c">5</div>
<div class="a" style="left:419.5px;top:279.5px;width:3px;height:3px;background:#1d6b47"></div>
<div class="a" style="left:393px;top:253.4px;width:52px;height:30.6px;border:3px solid #d3262b"></div>
<div class="a" style="left:706px;top:201px;width:14px;height:272px;background:#131313"></div>
<svg class="a" style="left:710px;top:205px;" width="9" height="7" viewBox="0 0 9 7" fill="none"><path d="M0.5 6 L4.5 0.5 L8.5 6 Z" fill="#9a9a9a"/></svg>
<div class="a" style="left:711px;top:214.8px;width:7px;height:140.5px;background:#9d9d9d;border-radius:3.5px"></div>
<svg class="a" style="left:710px;top:464px;" width="9" height="7" viewBox="0 0 9 7" fill="none"><path d="M0.5 0.5 L4.5 6 L8.5 0.5 Z" fill="#9a9a9a"/></svg>
<div class="a" style="left:1px;top:473.3px;width:90.7px;height:26px;background:#1b1c19;border-radius:0 5px 0 0"></div>
<div class="a" style="left:139.2px;top:473.3px;width:581px;height:26px;background:#1b1c19;border-radius:5px 0 0 0"></div>
<div class="a" style="left:91.7px;top:490px;width:47.5px;height:9px;background:#1b1c19"></div>
<svg class="a" style="left:19px;top:481px;" width="7" height="9" viewBox="0 0 7 9" fill="none"><path d="M5.5 1 L1.5 4.5 L5.5 8" stroke="#a8a8a8" stroke-width="1.1"/></svg>
<svg class="a" style="left:46px;top:481px;" width="7" height="9" viewBox="0 0 7 9" fill="none"><path d="M1.5 1 L5.5 4.5 L1.5 8" stroke="#a8a8a8" stroke-width="1.1"/></svg>
<div class="a" style="left:91.7px;top:472px;width:47.5px;height:23.6px;background:#ffffff;border-radius:0 0 5px 5px"></div>
<div class="t" style="left:98.3px;top:478.63px;font-size:10.6px;color:#1e1e1e;font-weight:700;letter-spacing:-0.15px">Sheet1</div>
<div class="a" style="left:98.4px;top:491.7px;width:33.6px;height:1.7px;background:#1d6b42"></div>
<div class="a" style="left:141.7px;top:478px;width:1px;height:15.7px;background:#505050"></div>
<svg class="a" style="left:176.5px;top:481px;" width="10" height="10" viewBox="0 0 10 10" fill="none"><path d="M5 0.5 V9.5 M0.5 5 H9.5" stroke="#d8d8d8" stroke-width="1.1"/></svg>
<div class="a" style="left:436px;top:482px;width:1.6px;height:1.6px;background:#bdbdbd;border-radius:50%"></div>
<div class="a" style="left:436px;top:485px;width:1.6px;height:1.6px;background:#bdbdbd;border-radius:50%"></div>
<div class="a" style="left:436px;top:488px;width:1.6px;height:1.6px;background:#bdbdbd;border-radius:50%"></div>
<svg class="a" style="left:453.5px;top:481.5px;" width="7" height="8" viewBox="0 0 7 8" fill="none"><path d="M6 0.5 L0.8 4 L6 7.5 Z" fill="#9a9a9a"/></svg>
<div class="a" style="left:463.7px;top:481.7px;width:187.6px;height:7px;background:#9a9a9a;border-radius:3.5px"></div>
<svg class="a" style="left:697.5px;top:481.5px;" width="7" height="8" viewBox="0 0 7 8" fill="none"><path d="M1 0.5 L6.2 4 L1 7.5 Z" fill="#9a9a9a"/></svg>
<div class="a" style="left:1px;top:498.5px;width:719px;height:17.5px;background:#141515"></div>
<div class="a" style="left:1px;top:498.6px;width:719px;height:1px;background:#2c2c2c"></div>
<div class="t" style="left:10.5px;top:504.46px;font-size:8.2px;color:#e0e0e0;font-weight:400;;-webkit-text-stroke:0.08px #e0e0e0">Ready</div>
<svg class="a" style="left:48.5px;top:503px;" width="14" height="12" viewBox="0 0 14 12" fill="none"><path d="M4.5 10.6 H1 V0.8 H11.8 V5" stroke="#d8d8d8" stroke-width="1.1"/><path d="M1 3.2 H11.8" stroke="#d8d8d8" stroke-width="1.1"/><path d="M2.7 6.5 V7.5 M2.7 8.8 V9.5" stroke="#d8d8d8" stroke-width="1"/><circle cx="8.6" cy="8" r="3.2" stroke="#d8d8d8" stroke-width="1.1" fill="#1b1c19"/><circle cx="8.6" cy="8" r="1.3" fill="#e0e0e0"/></svg>
<svg class="a" style="left:74px;top:502px;" width="14" height="13" viewBox="0 0 14 13" fill="none"><circle cx="5.3" cy="1.8" r="1.4" stroke="#d8d8d8" stroke-width="1"/><path d="M1 5.2 Q0.8 3.6 2.5 4 L5.3 4.8 L8.1 4 Q9.8 3.6 9.6 5.2 Q8.4 5.8 7 6.4 Q6.6 8.6 6.5 9 M3.6 6.4 Q4 8.6 4 11.5 Q4.2 12.5 5.6 12.3" stroke="#d8d8d8" stroke-width="1.05" fill="none"/><path d="M6.8 10.2 L8.5 12 L12.2 7.8" stroke="#d8d8d8" stroke-width="1.1"/></svg>
<div class="t" style="left:89.4px;top:504.20px;font-size:8.5px;color:#e0e0e0;font-weight:400;;-webkit-text-stroke:0.08px #e0e0e0">Accessibility: Good to go</div>
<div class="a" style="left:469.7px;top:499.5px;width:33px;height:16.5px;background:#242424"></div>
<svg class="a" style="left:480px;top:502.5px;" width="13" height="11" viewBox="0 0 13 11" fill="none"><rect x="0.6" y="0.6" width="11.6" height="10" stroke="#e6e6e6" stroke-width="1.2"/><path d="M0.6 3.1 H12.2 M0.6 5.6 H12.2 M0.6 8.1 H12.2 M3.5 0.6 V10.6 M6.4 0.6 V10.6 M9.3 0.6 V10.6" stroke="#e6e6e6" stroke-width="1.1"/></svg>
<svg class="a" style="left:512.5px;top:502px;" width="14" height="12" viewBox="0 0 14 12" fill="none"><rect x="0.9" y="0.8" width="11.6" height="10.4" rx="1" stroke="#d8d8d8" stroke-width="1.2"/><rect x="4.2" y="3.5" width="5" height="4.8" stroke="#d8d8d8" stroke-width="1.1"/><path d="M4.2 6 H9.2" stroke="#d8d8d8" stroke-width="0.9"/></svg>
<svg class="a" style="left:545.5px;top:502px;" width="14" height="12" viewBox="0 0 14 12" fill="none"><rect x="0.9" y="0.8" width="11.4" height="10.4" rx="0.8" stroke="#d8d8d8" stroke-width="1.2"/><path d="M0.9 6.2 H7.5 V0.8 M4.2 0.8 V6.2" stroke="#d8d8d8" stroke-width="1.1"/></svg>
<div class="a" style="left:573.3px;top:507.5px;width:6px;height:1px;background:#9a9a9a"></div>
<div class="a" style="left:583.7px;top:507.3px;width:81.3px;height:1.2px;background:#d0d0d0"></div>
<div class="a" style="left:622px;top:502.5px;width:5px;height:9.5px;background:#b8b8b8;border-radius:1px"></div>
<svg class="a" style="left:668.5px;top:504px;" width="8" height="8" viewBox="0 0 8 8" fill="none"><path d="M4 0.5 V7.5 M0.5 4 H7.5" stroke="#9a9a9a" stroke-width="1"/></svg>
<div class="t" style="left:685.5px;top:504.15px;font-size:8.8px;color:#ececec;font-weight:400;;-webkit-text-stroke:0.08px #ececec">100%</div>
<div class="a" style="left:0px;top:4px;width:1.2px;height:512px;background:#7a7a7a"></div>
<svg class="a" style="left:0px;top:0px;" width="6" height="6" viewBox="0 0 6 6" fill="none"><path d="M0.6 6 Q0.6 1 5 0.5" stroke="#7a7a7a" stroke-width="1.1"/></svg>
</body></html>
